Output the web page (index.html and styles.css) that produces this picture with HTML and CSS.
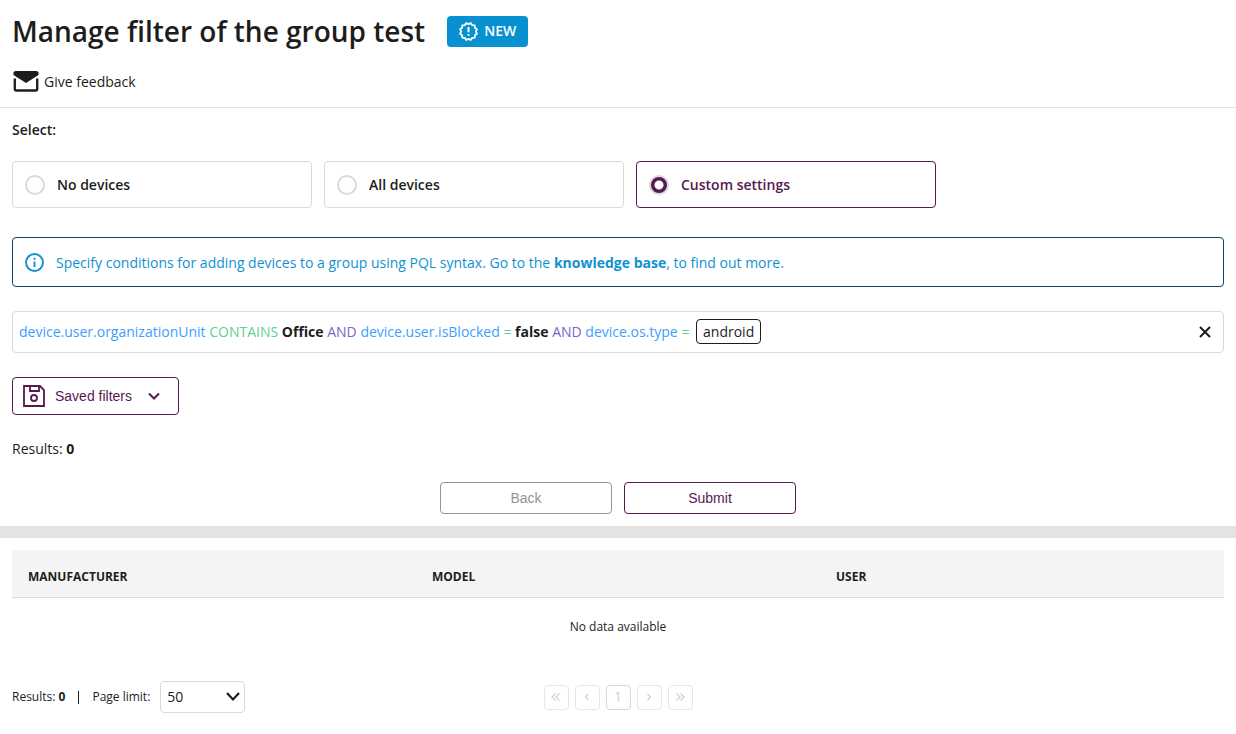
FILE: index.html
```html
<!DOCTYPE html>
<html lang="en">
<head>
<meta charset="utf-8">
<meta name="viewport" content="width=device-width, initial-scale=1">
<title>Manage filter of the group test</title>
<link rel="stylesheet" href="styles.css">
</head>
<body>
<header class="page-header">
  <div class="title-row">
    <h1 class="title">Manage filter of the group test</h1>
    <span class="badge">
      <svg class="badge-icon" viewBox="0 0 18 18" aria-hidden="true"><path d="M9 2 11.1 1.1 12.500 2.900 14.800 3.200 15.100 5.500 16.900 6.900 16 9 16.900 11.100 15.100 12.500 14.800 14.800 12.500 15.100 11.100 16.900 9 16 6.900 16.900 5.500 15.100 3.200 14.800 2.900 12.500 1.100 11.100 2 9 1.100 6.900 2.900 5.500 3.200 3.200 5.500 2.900 6.900 1.100Z" fill="none" stroke="currentColor" stroke-width="1.700"/><path d="M9 4.800v5M9 11.300v1.800" stroke="currentColor" stroke-width="1.800"/></svg>
      NEW
    </span>
  </div>
  <a class="feedback" href="#feedback">
    <svg class="mail-icon" viewBox="0 0 26 22" aria-hidden="true"><path d="M2.500 0h21Q25 0 25.500 1.500V4L13 12 .5 4V1.500Q1 0 2.500 0Z" fill="currentColor"/><path d="M1.800 7.500V18Q1.800 19.500 3.300 19.500h19.400Q24.200 19.500 24.200 18V7.500" fill="none" stroke="currentColor" stroke-width="2.300"/></svg>
    Give feedback
  </a>
</header>

<main>
  <form class="filter-form">
    <fieldset class="choices">
      <legend class="choices-label">Select:</legend>
      <div class="choice-row">
        <label class="choice"><input class="radio" type="radio" name="scope">No devices</label>
        <label class="choice"><input class="radio" type="radio" name="scope">All devices</label>
        <label class="choice"><input class="radio" type="radio" name="scope" checked>Custom settings</label>
      </div>
    </fieldset>

    <div class="info">
      <svg class="info-icon" viewBox="0 0 18 18" aria-hidden="true"><circle cx="9" cy="9" r="8" fill="none" stroke="currentColor" stroke-width="1.8"/><path d="M9 4.500v2M9 8v5.300" stroke="currentColor" stroke-width="1.8"/></svg>
      <p class="info-text">Specify conditions for adding devices to a group using PQL syntax. Go to the <a class="info-link" href="#knowledge-base">knowledge base</a>, to find out more.</p>
    </div>

    <div class="query">
      <div class="query-text" role="textbox" contenteditable="true" spellcheck="false" aria-label="PQL query"><span class="field">device.user.organizationUnit</span> <span class="operator">CONTAINS</span> <b>Office</b> <span class="logic">AND</span> <span class="field">device.user.isBlocked</span> <span class="operator">=</span> <b>false</b> <span class="logic">AND</span> <span class="field">device.os.type</span> <span class="operator">=</span> <span class="token">android</span></div>
      <button class="clear" type="button" aria-label="Clear query">
        <svg class="clear-icon" viewBox="0 0 12 12" aria-hidden="true"><path d="M1 1l10 10M11 1 1 11" stroke="currentColor" stroke-width="2"/></svg>
      </button>
    </div>

    <button class="button saved" type="button">
      <svg class="save-icon" viewBox="0 0 22 22" aria-hidden="true"><path d="M1 1h16l4 4v16H1ZM7 1v5h9V1" fill="none" stroke="currentColor" stroke-width="1.800"/><circle cx="11" cy="13" r="3" fill="none" stroke="currentColor" stroke-width="1.800"/></svg>
      Saved filters
      <svg class="chevron" viewBox="0 0 12 8" aria-hidden="true"><path d="M1 1.500l5 5 5-5" fill="none" stroke="currentColor" stroke-width="2"/></svg>
    </button>

    <p class="results">Results: <b>0</b></p>

    <div class="actions">
      <button class="button action back" type="button">Back</button>
      <button class="button action" type="submit">Submit</button>
    </div>
  </form>

  <section class="devices">
    <table class="table">
      <thead><tr><th>MANUFACTURER</th><th>MODEL</th><th>USER</th></tr></thead>
      <tbody><tr><td colspan="3">No data available</td></tr></tbody>
    </table>
    <footer class="table-footer">
      <div class="limits">
        <span>Results: <b>0</b></span>
        <span class="separator"></span>
        <label for="limit">Page limit:</label>
        <span class="select-wrap">
          <select class="select" id="limit"><option>50</option><option>100</option></select>
          <svg class="select-icon" viewBox="0 0 14 10" aria-hidden="true"><path d="M1 1l6 6.500L13 1" fill="none" stroke="currentColor" stroke-width="2.200"/></svg>
        </span>
      </div>
      <nav class="pages" aria-label="Pagination">
        <button class="page" type="button" aria-label="First page" disabled><svg class="page-icon" viewBox="0 0 10 8"><path d="M4.500.5 1 4l3.500 3.500M8.500.5 5 4l3.500 3.500" fill="none" stroke="currentColor" stroke-width="1.300"/></svg></button>
        <button class="page" type="button" aria-label="Previous page" disabled><svg class="page-icon" viewBox="0 0 10 8"><path d="M6.500 1l-3 3 3 3" fill="none" stroke="currentColor" stroke-width="1.300"/></svg></button>
        <button class="page current" type="button" disabled>1</button>
        <button class="page" type="button" aria-label="Next page" disabled><svg class="page-icon" viewBox="0 0 10 8"><path d="M3.500 1l3 3-3 3" fill="none" stroke="currentColor" stroke-width="1.300"/></svg></button>
        <button class="page" type="button" aria-label="Last page" disabled><svg class="page-icon" viewBox="0 0 10 8"><path d="M1.500.5 5 4 1.500 7.500M5.500.5 9 4 5.500 7.500" fill="none" stroke="currentColor" stroke-width="1.300"/></svg></button>
      </nav>
    </footer>
  </section>
</main>
</body>
</html>
```
FILE: styles.css
```css
* { box-sizing: border-box; }

body {
  margin: 0;
  background: #fff;
  color: #1d1d1b;
  font: 14px/20px "Open Sans", sans-serif;
}

.page-header {
  display: flex;
  flex-direction: column;
  align-items: flex-start;
  gap: 21px;
  padding: 12px 12px 14px;
  border-bottom: 1px solid #e3e3e3;
}

.title-row {
  display: flex;
  align-items: center;
  gap: 22px;
}

.title {
  margin: 0;
  font-size: 28px;
  line-height: 38px;
  font-weight: 600;
}

.badge {
  display: flex;
  align-items: center;
  gap: 6px;
  height: 31px;
  padding: 0 12px;
  border-radius: 4px;
  background: #0891d1;
  color: #fff;
  font-weight: 600;
}

.badge-icon { width: 19px; height: 19px; }

.feedback {
  display: flex;
  align-items: center;
  gap: 5px;
  padding-left: 1px;
  color: inherit;
  text-decoration: none;
}

.mail-icon { width: 26px; height: 22px; }

.filter-form {
  padding: 12px;
  border-bottom: 12px solid #e4e4e4;
}

.choices { margin: 0; padding: 0; border: 0; min-width: 0; }

.choices-label { padding: 0; margin-bottom: 21px; font-weight: 600; }

.choice-row {
  display: flex;
  flex-wrap: wrap;
  gap: 12px;
}

.choice {
  display: flex;
  align-items: center;
  gap: 12px;
  width: 300px;
  height: 47px;
  padding: 0 12px;
  border: 1px solid #dadada;
  border-radius: 4px;
  font-weight: 600;
}

.choice:has(:checked) { border-color: #57194f; color: #57194f; }

.radio {
  appearance: none;
  width: 20px;
  height: 20px;
  margin: 0;
  border: 2px solid #dadada;
  border-radius: 50%;
}

.radio:checked { background: radial-gradient(circle, #fff 4px, #57194f 5px); }

.info {
  display: flex;
  align-items: center;
  gap: 12px;
  min-height: 50px;
  margin-top: 29px;
  padding: 1px 12px 0;
  border: 1px solid #04486a;
  border-radius: 4px;
  color: #1191d0;
}

.info-icon { width: 19px; height: 19px; }

.info-text { margin: 0; }

.info-link { color: inherit; font-weight: 700; text-decoration: none; }

.query {
  display: flex;
  align-items: center;
  justify-content: space-between;
  min-height: 42px;
  margin-top: 24px;
  padding: 0 6px;
  border: 1px solid #dadada;
  border-radius: 4px;
}

.query-text { padding-bottom: 2px; outline: 0; }

.field { color: #3c9ffe; }
.operator { color: #5ecf98; }
.logic { color: #7a66c4; }

.token {
  display: inline-block;
  margin-left: 3px;
  padding: 2px 6px 1px;
  border: 1px solid #1d1d1b;
  border-radius: 4px;
}

.clear {
  display: flex;
  padding: 6px;
  border: 0;
  background: none;
  color: inherit;
}

.clear-icon { width: 12px; height: 12px; }

.button {
  border: 1px solid #57194f;
  border-radius: 4px;
  background: #fff;
  color: #57194f;
  font: 14px/20px "Liberation Sans", Arial, sans-serif;
}

.saved {
  display: flex;
  align-items: center;
  height: 38px;
  margin-top: 24px;
  padding: 0 18px 0 10px;
  gap: 10px;
}

.save-icon { width: 22px; height: 22px; }

.chevron { width: 12px; height: 8px; margin-left: 6px; }

.results { margin: 24px 0 23px; }

.actions {
  display: flex;
  justify-content: center;
  gap: 12px;
}

.action { width: 172px; height: 32px; }

.back { border-color: #949494; color: #949494; }

.devices { padding: 12px; font-size: 12px; }

.table {
  width: 100%;
  table-layout: fixed;
  border-collapse: separate;
  border-spacing: 0;
}

.table th {
  height: 48px;
  padding: 6px 16px 0;
  border-bottom: 1px solid #dadada;
  background: #f4f4f4;
  font-weight: 700;
  text-align: left;
}

.table td { height: 58px; text-align: center; }

.table-footer {
  display: grid;
  grid-template-columns: 1fr auto 1fr;
  align-items: center;
  margin-top: 25px;
}

.limits { display: flex; align-items: center; }

.separator {
  width: 1px;
  height: 13px;
  margin: 0 13px;
  background: #1d1d1b;
}

.select-wrap {
  display: grid;
  align-items: center;
  margin-left: 10px;
}

.select {
  grid-area: 1 / 1;
  appearance: none;
  width: 85px;
  height: 32px;
  padding: 0 6px;
  border: 1px solid #dadada;
  border-radius: 4px;
  background: #fff;
  color: inherit;
  font: 14px/20px "Open Sans", sans-serif;
}

.select-icon {
  grid-area: 1 / 1;
  justify-self: end;
  width: 14px;
  height: 10px;
  margin-right: 5px;
  pointer-events: none;
}

.pages { display: flex; gap: 6px; }

.page {
  display: flex;
  align-items: center;
  justify-content: center;
  width: 25px;
  height: 25px;
  padding: 0;
  border: 1px solid #e6e6e6;
  border-radius: 4px;
  background: #fff;
  color: #d2d2d2;
  font: 14px/20px "Open Sans", sans-serif;
}

.current { border-color: #d8d8d8; }

.page-icon { width: 10px; height: 8px; }
```
